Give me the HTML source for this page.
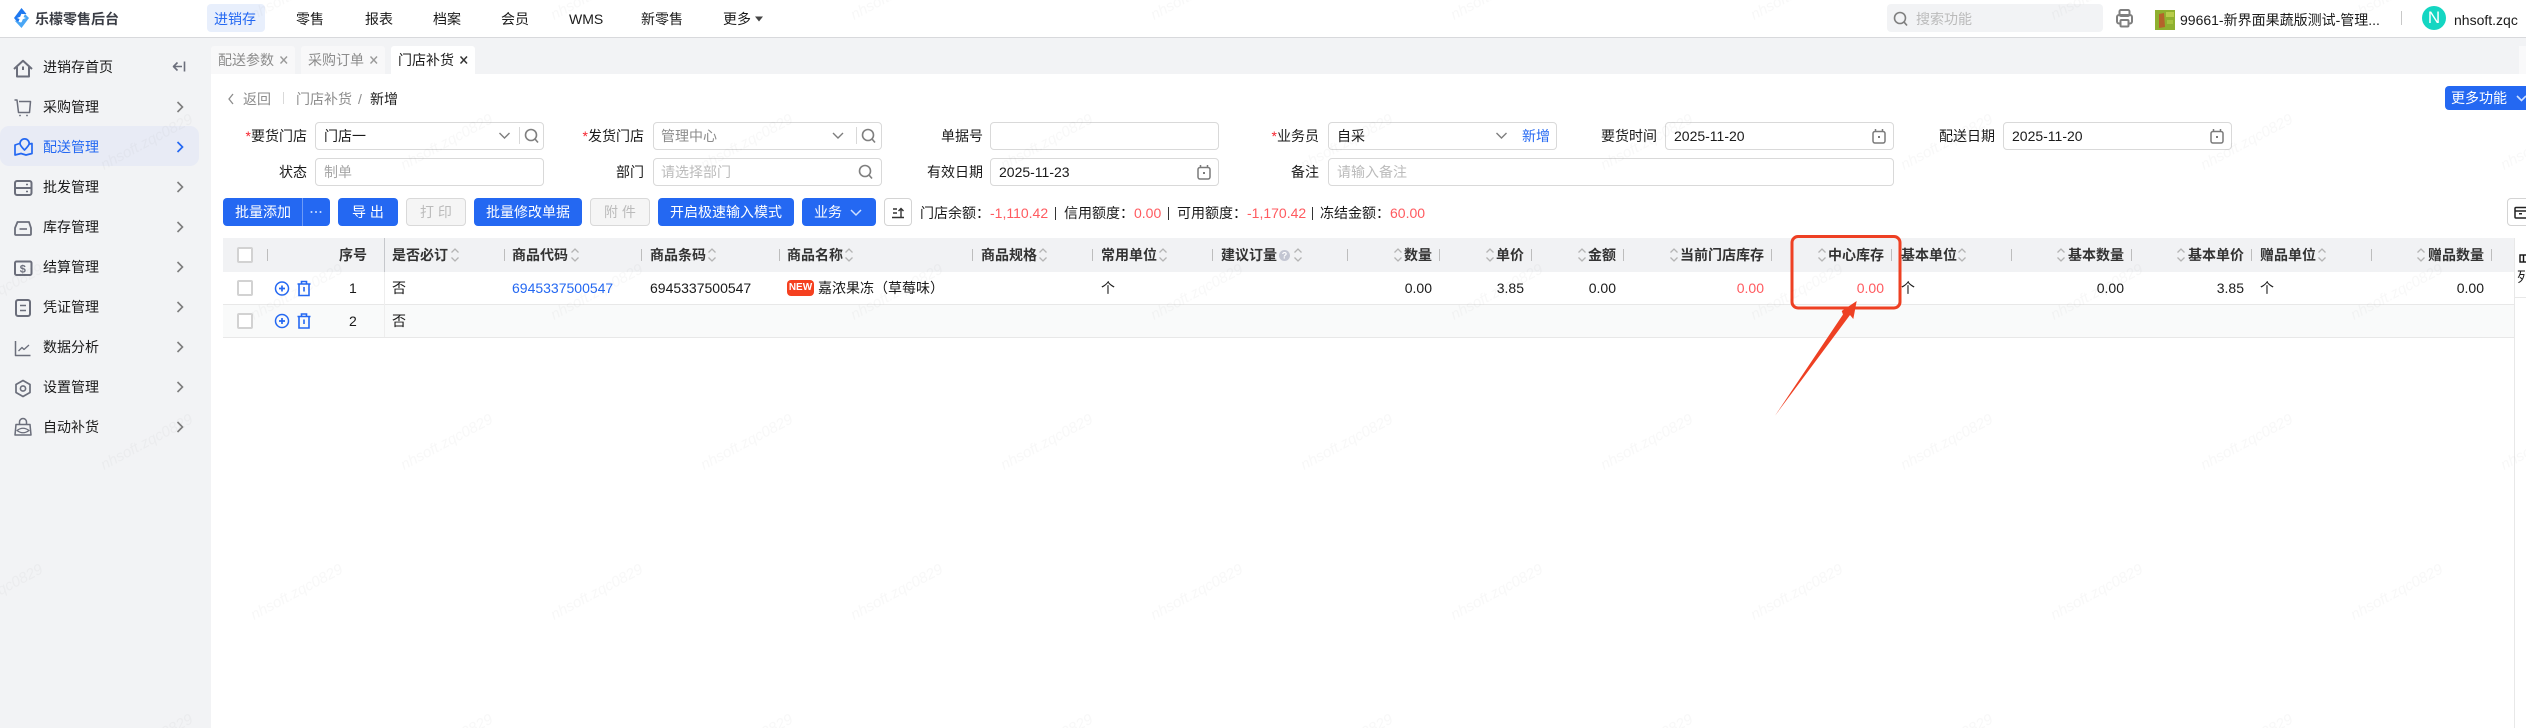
<!DOCTYPE html>
<html lang="zh"><head><meta charset="utf-8"><title>门店补货</title>
<style>
*{box-sizing:border-box}
html,body{margin:0;padding:0;width:2526px;height:728px;overflow:hidden;background:#fff}
body{position:relative;font-family:"Liberation Sans","Noto Sans CJK SC",sans-serif;font-size:14px;color:#1a1a1a}
.b{position:absolute}
.t{position:absolute;white-space:nowrap;line-height:20px;height:20px}
.g{color:#8c8c8c}.p{color:#bbb}.bl{color:#2468f2}.r{color:#ff5a5f}
.h{font-weight:700;color:#333}
.in{position:absolute;height:28px;border:1px solid #d9d9d9;border-radius:4px;background:#fff}
.btn{position:absolute;top:198px;height:28px;border-radius:4px;background:#2468f2;color:#fff;text-align:center;line-height:28px}
.dis{background:#f5f5f5;border:1px solid #d9d9d9;color:#bbb;line-height:26px}
.tab{position:absolute;top:46px;height:28px;width:84px;background:#f8f8f9;border-radius:3px 3px 0 0}
.d{position:absolute;top:249px;width:1px;height:12px;background:#bdbdbd}
.cb{position:absolute;left:237px;width:16px;height:16px;border:2px solid #d2d2d2;border-radius:2px;background:#fff}
</style></head><body>

<!-- layout backgrounds -->
<div class="b" style="left:0;top:0;width:2526px;height:37px;background:#fff"></div>
<div class="b" style="left:0;top:37px;width:2526px;height:1px;background:#d8d9dc"></div>
<div class="b" style="left:0;top:38px;width:211px;height:690px;background:#f2f3f5"></div>
<div class="b" style="left:211px;top:38px;width:2315px;height:36px;background:#f2f3f5"></div>
<div class="b" style="left:0;top:126px;width:199px;height:40px;background:#e8ebf5;border-radius:9px"></div>

<!-- top bar -->
<div class="t" style="left:35px;top:9px;font-weight:700;color:#3a3d45">乐檬零售后台</div>
<div class="b" style="left:207px;top:4px;width:58px;height:28px;background:#e8effc;border-radius:4px"></div>
<div class="t bl" style="left:214px;top:9px">进销存</div>
<div class="t" style="left:296px;top:9px">零售</div>
<div class="t" style="left:365px;top:9px">报表</div>
<div class="t" style="left:433px;top:9px">档案</div>
<div class="t" style="left:501px;top:9px">会员</div>
<div class="t" style="left:569px;top:9px">WMS</div>
<div class="t" style="left:641px;top:9px">新零售</div>
<div class="t" style="left:723px;top:9px">更多</div>
<div class="b" style="left:1887px;top:4px;width:216px;height:28px;background:#f2f3f5;border-radius:4px"></div>
<div class="t p" style="left:1916px;top:9px">搜索功能</div>
<div class="t" style="left:2180px;top:10px;width:202px;overflow:hidden">99661-新界面果蔬版测试-管理...</div>
<div class="b" style="left:2401px;top:11px;width:1px;height:14px;background:#c8c8c8"></div>
<div class="b" style="left:2422px;top:6px;width:24px;height:24px;border-radius:50%;background:#14d6c2;color:#fff;text-align:center;line-height:24px;font-size:17px">N</div>
<div class="t" style="left:2454px;top:10px">nhsoft.zqc</div>

<!-- sidebar -->
<div class="t" style="left:43px;top:57px">进销存首页</div>
<div class="t" style="left:43px;top:97px">采购管理</div>
<div class="t bl" style="left:43px;top:137px">配送管理</div>
<div class="t" style="left:43px;top:177px">批发管理</div>
<div class="t" style="left:43px;top:217px">库存管理</div>
<div class="t" style="left:43px;top:257px">结算管理</div>
<div class="t" style="left:43px;top:297px">凭证管理</div>
<div class="t" style="left:43px;top:337px">数据分析</div>
<div class="t" style="left:43px;top:377px">设置管理</div>
<div class="t" style="left:43px;top:417px">自动补货</div>

<!-- tabs -->
<div class="tab" style="left:211px"></div>
<div class="tab" style="left:301px"></div>
<div class="tab" style="left:391px;background:#fff"></div>
<div class="b" style="left:2519px;top:46px;width:7px;height:28px;background:#f9f9fa"></div>
<div class="t g" style="left:218px;top:50px">配送参数</div>
<div class="t g" style="left:308px;top:50px">采购订单</div>
<div class="t" style="left:398px;top:50px">门店补货</div>

<!-- breadcrumb -->
<div class="t g" style="left:243px;top:89px">返回</div>
<div class="b" style="left:283px;top:92px;width:1px;height:12px;background:#d9d9d9"></div>
<div class="t g" style="left:296px;top:89px">门店补货</div>
<div class="t g" style="left:358px;top:89px">/</div>
<div class="t" style="left:370px;top:89px">新增</div>
<div class="btn" style="left:2445px;top:86px;width:81px;height:24px;line-height:24px;text-align:left;padding-left:6px;border-radius:4px 0 0 4px">更多功能</div>

<!-- form -->
<div class="in" style="left:315px;top:122px;width:229px"></div>
<div class="in" style="left:653px;top:122px;width:229px"></div>
<div class="in" style="left:990px;top:122px;width:229px"></div>
<div class="in" style="left:1328px;top:122px;width:229px"></div>
<div class="in" style="left:1665px;top:122px;width:229px"></div>
<div class="in" style="left:2003px;top:122px;width:229px"></div>
<div class="in" style="left:315px;top:158px;width:229px"></div>
<div class="in" style="left:653px;top:158px;width:229px"></div>
<div class="in" style="left:990px;top:158px;width:229px"></div>
<div class="in" style="left:1328px;top:158px;width:566px"></div>
<div class="b" style="left:519px;top:127px;width:1px;height:17px;background:#d9d9d9"></div>
<div class="b" style="left:856px;top:127px;width:1px;height:17px;background:#d9d9d9"></div>

<div class="t" style="right:2219px;top:126px"><span class="r" style="color:#f5222d">*</span>要货门店</div>
<div class="t" style="right:1882px;top:126px"><span class="r" style="color:#f5222d">*</span>发货门店</div>
<div class="t" style="right:1543px;top:126px">单据号</div>
<div class="t" style="right:1207px;top:126px"><span class="r" style="color:#f5222d">*</span>业务员</div>
<div class="t" style="right:869px;top:126px">要货时间</div>
<div class="t" style="right:531px;top:126px">配送日期</div>
<div class="t" style="right:2219px;top:162px">状态</div>
<div class="t" style="right:1882px;top:162px">部门</div>
<div class="t" style="right:1543px;top:162px">有效日期</div>
<div class="t" style="right:1207px;top:162px">备注</div>

<div class="t" style="left:324px;top:126px">门店一</div>
<div class="t g" style="left:661px;top:126px">管理中心</div>
<div class="t" style="left:1337px;top:126px">自采</div>
<div class="t bl" style="left:1522px;top:126px">新增</div>
<div class="t" style="left:1674px;top:126px">2025-11-20</div>
<div class="t" style="left:2012px;top:126px">2025-11-20</div>
<div class="t g" style="left:324px;top:162px;color:#a6a6a6">制单</div>
<div class="t p" style="left:661px;top:162px">请选择部门</div>
<div class="t" style="left:999px;top:162px">2025-11-23</div>
<div class="t p" style="left:1337px;top:162px">请输入备注</div>

<!-- toolbar -->
<div class="btn" style="left:223px;width:107px;text-align:left;padding-left:12px">批量添加</div>
<div class="b" style="left:302px;top:198px;width:1px;height:28px;background:#6d9bf6"></div>
<div class="btn" style="left:338px;width:60px">导 出</div>
<div class="btn dis" style="left:406px;width:60px">打 印</div>
<div class="btn" style="left:474px;width:108px">批量修改单据</div>
<div class="btn dis" style="left:590px;width:60px">附 件</div>
<div class="btn" style="left:658px;width:136px">开启极速输入模式</div>
<div class="btn" style="left:802px;width:74px;text-align:left;padding-left:12px">业务</div>
<div class="b" style="left:884px;top:198px;width:28px;height:28px;border:1px solid #d4d4d4;border-radius:4px;background:#fff"></div>
<div class="b" style="left:2507px;top:198px;width:30px;height:28px;border:1px solid #d4d4d4;border-radius:4px;background:#fff"></div>

<div class="t" style="left:920px;top:203px">门店余额：</div>
<div class="t r" style="left:990px;top:203px">-1,110.42</div>
<div class="b" style="left:1055px;top:207px;width:1px;height:13px;background:#333"></div>
<div class="t" style="left:1064px;top:203px">信用额度：</div>
<div class="t r" style="left:1134px;top:203px">0.00</div>
<div class="b" style="left:1168px;top:207px;width:1px;height:13px;background:#333"></div>
<div class="t" style="left:1177px;top:203px">可用额度：</div>
<div class="t r" style="left:1247px;top:203px">-1,170.42</div>
<div class="b" style="left:1312px;top:207px;width:1px;height:13px;background:#333"></div>
<div class="t" style="left:1320px;top:203px">冻结金额：</div>
<div class="t r" style="left:1390px;top:203px">60.00</div>

<!-- table -->
<div class="b" style="left:223px;top:238px;width:2291px;height:34px;background:#f1f2f4"></div>
<div class="b" style="left:223px;top:305px;width:2291px;height:32px;background:#f9fafa"></div>
<div class="b" style="left:223px;top:304px;width:2291px;height:1px;background:#e8e8e8"></div>
<div class="b" style="left:223px;top:337px;width:2291px;height:1px;background:#e8e8e8"></div>
<div class="b" style="left:2514px;top:238px;width:1px;height:490px;background:#e8e8e8"></div>
<div class="b" style="left:2515px;top:297px;width:11px;height:1px;background:#e8e8e8"></div>
<div class="b" style="left:384px;top:238px;width:1px;height:34px;background:#c6c8cc"></div>
<div class="b" style="left:384px;top:272px;width:1px;height:65px;background:#eeeeee"></div>

<div class="d" style="left:267px"></div><div class="d" style="left:504px"></div><div class="d" style="left:641px"></div><div class="d" style="left:779px"></div><div class="d" style="left:972px"></div><div class="d" style="left:1092px"></div><div class="d" style="left:1212px"></div><div class="d" style="left:1347px"></div><div class="d" style="left:1439px"></div><div class="d" style="left:1531px"></div><div class="d" style="left:1623px"></div><div class="d" style="left:1771px"></div><div class="d" style="left:1891px"></div><div class="d" style="left:2011px"></div><div class="d" style="left:2131px"></div><div class="d" style="left:2251px"></div><div class="d" style="left:2371px"></div><div class="d" style="left:2491px"></div>

<div class="cb" style="top:247px"></div><div class="cb" style="top:280px"></div><div class="cb" style="top:313px"></div>

<div class="t h" style="left:339px;top:245px">序号</div>
<div class="t h" style="left:392px;top:245px">是否必订</div>
<div class="t h" style="left:512px;top:245px">商品代码</div>
<div class="t h" style="left:650px;top:245px">商品条码</div>
<div class="t h" style="left:787px;top:245px">商品名称</div>
<div class="t h" style="left:981px;top:245px">商品规格</div>
<div class="t h" style="left:1101px;top:245px">常用单位</div>
<div class="t h" style="left:1221px;top:245px">建议订量</div>
<div class="t h" style="right:1094px;top:245px">数量</div>
<div class="t h" style="right:1002px;top:245px">单价</div>
<div class="t h" style="right:910px;top:245px">金额</div>
<div class="t h" style="right:762px;top:245px">当前门店库存</div>
<div class="t h" style="right:642px;top:245px">中心库存</div>
<div class="t h" style="left:1901px;top:245px">基本单位</div>
<div class="t h" style="right:402px;top:245px">基本数量</div>
<div class="t h" style="right:282px;top:245px">基本单价</div>
<div class="t h" style="left:2260px;top:245px">赠品单位</div>
<div class="t h" style="right:42px;top:245px">赠品数量</div>

<div class="t" style="left:349px;top:278px">1</div>
<div class="t" style="left:392px;top:278px">否</div>
<div class="t bl" style="left:512px;top:278px">6945337500547</div>
<div class="t" style="left:650px;top:278px">6945337500547</div>
<div class="b" style="left:787px;top:280px;width:27px;height:16px;background:#f5401f;border-radius:4px;color:#fff;font-size:10px;font-weight:bold;line-height:16px;text-align:center">NEW</div>
<div class="t" style="left:818px;top:278px">嘉浓果冻（草莓味）</div>
<div class="t" style="left:1101px;top:278px">个</div>
<div class="t" style="right:1094px;top:278px">0.00</div>
<div class="t" style="right:1002px;top:278px">3.85</div>
<div class="t" style="right:910px;top:278px">0.00</div>
<div class="t r" style="right:762px;top:278px">0.00</div>
<div class="t r" style="right:642px;top:278px">0.00</div>
<div class="t" style="left:1901px;top:278px">个</div>
<div class="t" style="right:402px;top:278px">0.00</div>
<div class="t" style="right:282px;top:278px">3.85</div>
<div class="t" style="left:2260px;top:278px">个</div>
<div class="t" style="right:42px;top:278px">0.00</div>
<div class="t" style="left:349px;top:311px">2</div>
<div class="t" style="left:392px;top:311px">否</div>
<div class="t" style="left:2517px;top:267px">列</div>

<!-- icons & annotation overlay -->
<svg class="b" style="left:0;top:0" width="2526" height="728" viewBox="0 0 2526 728" fill="none">
<defs>
<g id="s" stroke="#b4b4b4" stroke-width="1.3" fill="none"><path d="M-3.5-2.5 0-6 3.5-2.5"/><path d="M-3.5 2.5 0 6 3.5 2.5"/></g>
<g id="ch" stroke="#7d7d7d" stroke-width="1.6" fill="none"><path d="M-2.5-5 2.5 0-2.5 5"/></g>
<g id="dn" stroke="#7d7d7d" stroke-width="1.4" fill="none"><path d="M-5-2.5 0 2.5 5-2.5"/></g>
<g id="q" stroke="#7f7f7f" stroke-width="1.6" fill="none"><circle cx="-1" cy="-1" r="5.5"/><path d="M3 3 6 6.5"/></g>
<g id="cal" stroke="#7a7a7a" stroke-width="1.5" fill="none"><rect x="-6" y="-4.5" width="12" height="11.5" rx="2"/><path d="M-3.5-7v3M3.5-7v3"/><rect x="-1" y="0" width="2" height="2" fill="#7a7a7a" stroke="none"/></g>
<g id="pl" stroke="#2468f2" stroke-width="1.5" fill="none"><circle r="6.5"/><path d="M-3 0H3M0-3V3" stroke-width="1.7"/></g>
<g id="tr" stroke="#2468f2" stroke-width="1.6" fill="none"><path d="M-6.5-4.5H6.5M-2.5-4.5V-7H2.5V-4.5"/><path d="M-5-4.5V7H5V-4.5"/><path d="M0-1.5V3"/></g>
</defs>

<!-- logo -->
<path d="M21.5 8 14 18l4 5 3.5-9 5 0z" fill="#1e78f0"/>
<path d="M29 18 21.5 28 14.5 20.5 21 22.5 25 14z" fill="#49a6f5"/>
<path d="M21.5 13.5l1.3 3.2 3.2 1.3-3.2 1.3-1.3 3.2-1.3-3.2-3.2-1.3 3.2-1.3z" fill="#fff"/>
<path d="M755 16.5h8l-4 5z" fill="#444"/>

<!-- sidebar icons -->
<g stroke="#6b6e7b" stroke-width="2" stroke-linejoin="round">
<path d="M14 69 23 60.8 32 69"/><path d="M17 67V76.5H29V67"/><path d="M23 66.5V70"/>
<path d="M184.5 61.5V71.5M173.5 66.5H182M177.5 62.5 173.5 66.5 177.5 70.5" stroke-width="1.6"/>
<path d="M14.5 100H17L18.5 112.5H29.5L30.5 101.5H19" stroke-width="1.5"/>
<circle cx="20" cy="115.5" r=".9" fill="#6b6e7b" stroke="none"/><circle cx="27" cy="115.5" r=".9" fill="#6b6e7b" stroke="none"/>
<rect x="15" y="181" width="16.500" height="14" rx="2"/><path d="M15 188H31.500"/><path d="M26 184.500h2M26 191.500h2" stroke-width="1.400"/>
<path d="M17.500 222H29L31 228V234a1 1 0 0 1-1 1H16a1 1 0 0 1-1-1V228Z" stroke-width="1.800"/><path d="M19.500 229H27" stroke-width="1.600"/>
<rect x="15" y="261.500" width="16.500" height="13.500" rx="1.500"/>
<rect x="16" y="300" width="14" height="16" rx="2"/><path d="M20 305.500H26M20 310.500H26" stroke-width="1.600"/>
<path d="M15.500 341V355.500H30.500" stroke-width="1.500"/><path d="M18.500 351 22 347.500 24 349.500 29 345" stroke-width="1.300"/>
<path d="M23 380.500 30 384.500V392.500L23 396.500 16 392.500V384.500Z" stroke-width="1.700"/><circle cx="23" cy="388.500" r="2.600" stroke-width="1.600"/>
<path d="M16 424.500H30L31 435H15Z" stroke-width="1.500"/><path d="M19.500 424V422A3.500 3.500 0 0 1 26.500 422V424" stroke-width="1.500"/><path d="M17 430.500Q23 426 29 430.500 23 435 17 430.500Z" stroke-width="1.300"/>
</g>
<text x="19.800" y="272.500" font-family="Liberation Sans" font-size="11" font-weight="bold" fill="#6b6e7b">$</text>
<g stroke="#2468f2" stroke-width="1.700" stroke-linejoin="round">
<path d="M19.500 143.500 15 145V155L21 153.500 26 155 32 153.500V143.500L29.500 144"/>
<path d="M24.500 150C21.500 147 20 145 20 143.500A4.600 4.600 0 0 1 29.200 143.500C29.200 145 27.500 147 24.500 150Z" fill="#e8ebf5"/>
</g>
<use href="#ch" x="180" y="107"/><use href="#ch" x="180" y="187"/><use href="#ch" x="180" y="227"/><use href="#ch" x="180" y="267"/><use href="#ch" x="180" y="307"/><use href="#ch" x="180" y="347"/><use href="#ch" x="180" y="387"/><use href="#ch" x="180" y="427"/>
<path d="M177.500 142 182.500 147 177.500 152" stroke="#2468f2" stroke-width="1.700"/>

<!-- top-right -->
<use href="#q" x="1901" y="19"/>
<g stroke="#7f7f7f" stroke-width="2"><rect x="2119.500" y="10" width="10" height="6" rx="1.500"/><rect x="2117" y="15" width="15" height="8.500" rx="2"/><rect x="2120.500" y="20" width="8" height="6.500" rx="1" fill="#fff"/></g>
<rect x="2155" y="10" width="20" height="20" fill="#8fb02f"/><rect x="2166" y="12" width="8" height="5" fill="#b7cc4a"/><path d="M2159 14 2164 13 2165 27 2159 28Z" fill="#b4632a"/><rect x="2167" y="20" width="6" height="4" fill="#a6c23e"/>

<!-- tab close -->
<g stroke="#9a9a9a" stroke-width="1.400"><path d="M280.500 56.500 287 63.500M287 56.500 280.500 63.500M370.500 56.500 377 63.500M377 56.500 370.500 63.500"/></g>
<g stroke="#333" stroke-width="1.500"><path d="M460.500 56.500 467 63.500M467 56.500 460.500 63.500"/></g>
<path d="M233 94 229 99 233 104" stroke="#8c8c8c" stroke-width="1.300"/>
<path d="M2517 96 2521.500 100.500 2526 96" stroke="#cfe0ff" stroke-width="1.600"/>

<!-- form icons -->
<use href="#dn" x="504.500" y="135.500"/><use href="#q" x="532" y="136"/>
<use href="#dn" x="838" y="135.500"/><use href="#q" x="869" y="136"/>
<use href="#q" x="866" y="172"/>
<use href="#dn" x="1501.500" y="135.500"/>
<use href="#cal" x="1879" y="136"/><use href="#cal" x="2217" y="136"/><use href="#cal" x="1204" y="172"/>

<!-- toolbar icons -->
<circle cx="311.500" cy="212" r="1" fill="#cfe0ff"/><circle cx="316" cy="212" r="1" fill="#cfe0ff"/><circle cx="320.500" cy="212" r="1" fill="#cfe0ff"/>
<path d="M851 210 856 215 861 210" stroke="#cfe0ff" stroke-width="1.500"/>
<g stroke="#333" stroke-width="1.400"><path d="M893 209H897M893 213H897M892 217.500H904M901 217V208.500M898.500 211 901 208.500 903.500 211"/></g>
<g stroke="#222" stroke-width="1.500"><rect x="2515" y="207.500" width="13" height="10.500" rx="1"/><path d="M2514.500 211H2528"/></g><rect x="2519" y="213" width="3" height="1.500" fill="#222"/>
<g stroke="#111" stroke-width="1.400"><rect x="2520" y="255" width="8" height="7"/><path d="M2523.500 255V262"/></g>

<!-- sort icons -->
<use href="#s" x="455" y="255"/><use href="#s" x="575" y="255"/><use href="#s" x="712" y="255"/><use href="#s" x="849" y="255"/><use href="#s" x="1043" y="255"/><use href="#s" x="1163" y="255"/><use href="#s" x="1298" y="255"/><use href="#s" x="1398" y="255"/><use href="#s" x="1490" y="255"/><use href="#s" x="1582" y="255"/><use href="#s" x="1674" y="255"/><use href="#s" x="1822" y="255"/><use href="#s" x="1962" y="255"/><use href="#s" x="2061" y="255"/><use href="#s" x="2181" y="255"/><use href="#s" x="2322" y="255"/><use href="#s" x="2421" y="255"/>
<circle cx="1284.500" cy="255.500" r="5.500" fill="#c3c6d2"/><text x="1284.500" y="258.500" font-family="Liberation Sans" font-size="9" font-weight="bold" fill="#fff" text-anchor="middle">?</text>

<!-- row icons -->
<use href="#pl" x="282" y="288.500"/><use href="#tr" x="304" y="288.500"/>
<use href="#pl" x="282" y="321"/><use href="#tr" x="304" y="321"/>

<!-- annotation -->
<rect x="1792" y="236.500" width="108" height="71.500" rx="6" stroke="#ee4023" stroke-width="3"/>
<path d="M1856.700 301 1841.700 311 1843 314.500 1775 415.700 1850 315 1853.300 319Z" fill="#ee4023"/>
</svg>

<!-- watermark -->
<svg class="b" style="left:0;top:0;pointer-events:none" width="2526" height="728">
<defs><pattern id="wm" width="300" height="300" patternUnits="userSpaceOnUse">
<g font-family="Liberation Sans" font-size="15" font-style="italic" fill="#000" fill-opacity=".028">
<text transform="translate(104 170) rotate(-28)">nhsoft.zqc0829</text>
<text transform="translate(254 20) rotate(-28)">nhsoft.zqc0829</text>
<text transform="translate(254 320) rotate(-28)">nhsoft.zqc0829</text>
<text transform="translate(-46 20) rotate(-28)">nhsoft.zqc0829</text>
<text transform="translate(-46 320) rotate(-28)">nhsoft.zqc0829</text>
</g></pattern></defs>
<rect width="2526" height="728" fill="url(#wm)"/>
</svg>
</body></html>
